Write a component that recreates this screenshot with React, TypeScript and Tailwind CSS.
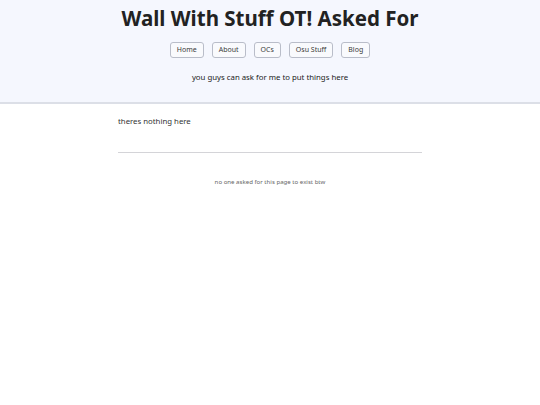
export default function App() {
  const links = ['Home', 'About', 'OCs', 'Osu Stuff', 'Blog'];
  return (
    <div className="min-h-screen bg-white text-[#222]" style={{ fontFamily: '"Noto Sans", sans-serif' }}>
      <header className="bg-[#f5f7fe] border-b-2 border-[#dcdfe7] pt-[4px] pb-[19px] text-center">
        <h1 className="text-[20.5px] font-bold leading-[28px] text-[#222]">Wall With Stuff OT! Asked For</h1>
        <nav className="mt-[10px] flex justify-center gap-[8px]">
          {links.map((l) => (
            <a
              key={l}
              href="#"
              className="h-[16px] px-[6px] flex items-center rounded-[3px] border border-[#b9bdc9] bg-[#f9fafd] text-[7px] text-[#3a3a3a]"
            >
              {l}
            </a>
          ))}
        </nav>
        <p className="mt-[13px] text-[7.8px] leading-[12px] text-[#222]">you guys can ask for me to put things here</p>
      </header>
      <main className="w-[304px] mx-auto pt-[11px]">
        <p className="text-[7.8px] leading-[12px] text-[#333]">theres nothing here</p>
        <hr className="mt-[25px] border-t border-[#d4d4d8]" />
        <p className="mt-[24px] text-center text-[6.1px] text-[#666]">no one asked for this page to exist btw</p>
      </main>
    </div>
  );
}
